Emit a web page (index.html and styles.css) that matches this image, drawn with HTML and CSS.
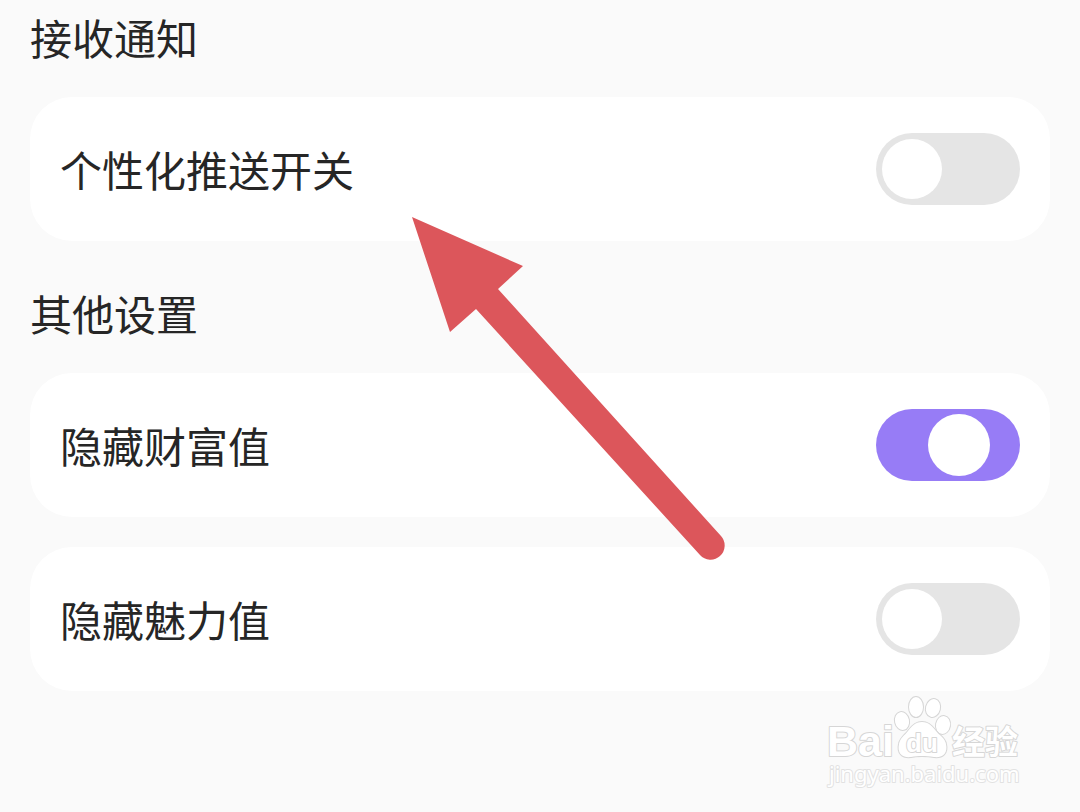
FILE: index.html
```html
<!DOCTYPE html>
<html lang="zh-CN">
<head>
  <meta charset="UTF-8" />
  <meta name="viewport" content="width=device-width, initial-scale=1.0"/>
  <title>通知设置</title>
  <link rel="stylesheet" href="styles.css">
</head>
<body>

  <main class="settings">
    <section class="group">
      <h2>接收通知</h2>
      <div class="card">
        <label for="push">个性化推送开关</label>
        <input type="checkbox" class="switch" id="push" />
      </div>
    </section>

    <section class="group">
      <h2>其他设置</h2>
      <div class="card">
        <label for="wealth">隐藏财富值</label>
        <input type="checkbox" class="switch" id="wealth" checked />
      </div>
      <div class="card">
        <label for="charm">隐藏魅力值</label>
        <input type="checkbox" class="switch" id="charm" />
      </div>
    </section>

    <!-- pointer to the push switch row -->
    <svg class="arrow" viewBox="0 0 314 344" aria-hidden="true">
      <path d="M0 1L111 50L86 73L309 320A14 14 0 0 1 288 339L64 93L38 116Z"/>
    </svg>
  </main>

  <svg class="watermark" viewBox="0 0 230 120" role="img" aria-label="Baidu 经验">
    <g class="mark">
      <ellipse cx="92" cy="41" rx="7" ry="9" transform="rotate(-12 92 41)"/>
      <ellipse cx="106" cy="27" rx="7" ry="10"/>
      <ellipse cx="123" cy="28" rx="7" ry="9" transform="rotate(14 123 28)"/>
      <ellipse cx="133" cy="45" rx="7" ry="9" transform="rotate(10 133 45)"/>
      <path d="M112 42C105 42 101 47 98 51C95 55 90 58 89 64C87 73 92 78 101 77C105 76 108 76 112 76C116 76 119 76 124 77C133 78 138 73 136 64C135 58 129 55 126 51C123 47 119 42 112 42Z"/>
      <text class="bai" x="17" y="76">Bai</text>
      <text class="du" x="96" y="72">du</text>
      <text class="jingyan" x="142" y="74">经验</text>
      <text class="site" x="19" y="102">jingyan.baidu.com</text>
    </g>
  </svg>

</body>
</html>
```

FILE: styles.css
```css
* {
  box-sizing: border-box;
}
body {
  font-family: "Noto Sans CJK SC", sans-serif;
  margin: 0;
  min-height: 100vh;
  position: relative;
  background-color: #fafafa;
  color: #262626;
}
.settings {
  position: relative;
  padding: 7px 30px;
}
.group {
  display: flex;
  flex-direction: column;
  gap: 30px;
  margin-bottom: 42px;
}
h2 {
  margin: 0;
  font-size: 42px;
  font-weight: 400;
  line-height: 60px;
}
.card {
  display: flex;
  justify-content: space-between;
  align-items: center;
  padding: 36px 30px;
  background-color: white;
  border-radius: 42px;
}
.card label {
  font-size: 42px;
  line-height: 60px;
}
.switch {
  appearance: none;
  display: flex;
  align-items: center;
  width: 144px;
  height: 72px;
  margin: 0;
  padding: 0 6px;
  border-radius: 36px;
  background-color: #e5e5e5;
  cursor: pointer;
}
.switch::before {
  content: "";
  width: 60px;
  height: 60px;
  border-radius: 50%;
  background-color: white;
}
.switch:checked {
  justify-content: flex-end;
  padding-right: 30px;
  background-color: #977cf6;
}
.switch:checked::before {
  width: 62px;
  height: 62px;
}
.arrow {
  position: absolute;
  left: 412px;
  top: 216px;
  width: 314px;
  height: 344px;
  fill: #dc565b;
  pointer-events: none;
}
.watermark {
  position: absolute;
  right: 40px;
  bottom: 12px;
  width: 230px;
  height: 120px;
}
.mark {
  fill: white;
  stroke: #d6d6d6;
  stroke-width: 2px;
  stroke-linejoin: round;
  paint-order: stroke;
}
.bai {
  font: bold 43px "Liberation Sans", sans-serif;
}
.du {
  font: bold 26px "Liberation Sans", sans-serif;
}
.jingyan {
  font: bold 33px "Noto Sans CJK SC", sans-serif;
}
.site {
  font: 22px "Noto Sans", sans-serif;
  stroke: #e2e2e2;
}
```
